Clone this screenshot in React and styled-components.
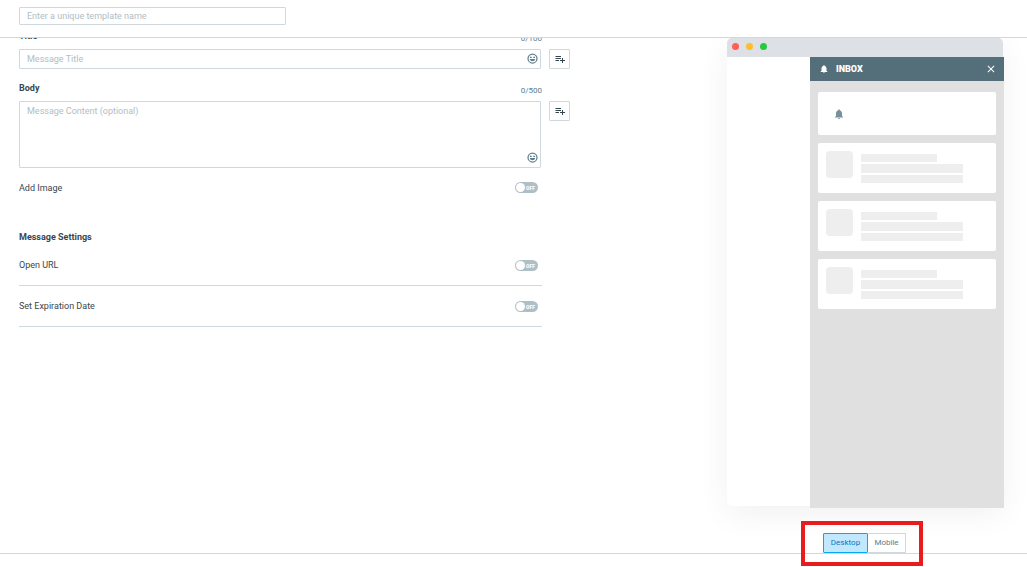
import React, { useState } from "react";
import styled, { createGlobalStyle } from "styled-components";
import { MdPlaylistAdd, MdNotifications, MdClose } from "react-icons/md";

const line = "#cfd8dc";
const ink = "#37474f";
const muted = "#607d8b";

const GlobalStyle = createGlobalStyle`
  *, *::before, *::after { box-sizing: border-box; }
  body { margin: 0; background: #fff; color: ${ink}; font: 9px/16px Roboto, "Liberation Sans", sans-serif; }
  button, input, textarea { font: inherit; color: inherit; margin: 0; }
`;

const Page = styled.div`
  display: flex;
  flex-direction: column;
  height: 100vh;
  overflow: hidden;
`;

const Header = styled.header`
  position: relative;
  z-index: 1;
  flex: none;
  padding: 7px 19px 12px;
  background: #fff;
  border-bottom: 1px solid ${line};
`;

const Field = styled.input`
  display: block;
  width: 100%;
  max-width: ${(p) => p.$max || "none"};
  height: ${(p) => (p.$max ? "18px" : "20px")};
  padding: 0 7px;
  border: 1px solid ${line};
  border-radius: 1px;
  background: #fff;
  outline: none;
  &::placeholder { color: #b0bec5; opacity: 1; }
`;

const Area = styled(Field)`
  height: 67px;
  padding: 1px 7px;
  resize: none;
`;

const Main = styled.main`
  display: flex;
  flex: 1;
  justify-content: space-between;
  min-height: 0;
  padding: 0 24px 0 19px;
`;

const Form = styled.form`
  flex: 0 1 551px;
  min-width: 0;
  overflow: hidden;
`;

const Scrolled = styled.div`
  margin-top: -10px;
`;

const LabelRow = styled.div`
  display: flex;
  justify-content: space-between;
  height: 21px;
  margin-right: 28px;
`;

const Label = styled.label`
  font-weight: 700;
`;

const Counter = styled.span`
  padding-top: 3px;
  color: ${muted};
  font-size: 8px;
`;

const FieldRow = styled.div`
  display: flex;
  align-items: flex-start;
  gap: 8px;
  margin-bottom: ${(p) => p.$gap};
`;

const FieldBox = styled.div`
  position: relative;
  flex: 1;
`;

const EmojiButton = styled.button`
  position: absolute;
  right: 3px;
  bottom: 5px;
  display: flex;
  padding: 0;
  border: 0;
  background: none;
  color: ${muted};
`;

const AddButton = styled.button`
  display: flex;
  align-items: center;
  justify-content: center;
  width: 21px;
  height: 20px;
  padding: 0;
  border: 1px solid ${line};
  border-radius: 1px;
  background: #fff;
  font-size: 12px;
`;

const SettingRow = styled.label`
  display: flex;
  align-items: center;
  justify-content: space-between;
  height: ${(p) => (p.$plain ? "39px" : "41px")};
  margin-right: 28px;
  padding-right: 4px;
  border-bottom: ${(p) => (p.$plain ? "0" : `1px solid ${line}`)};
`;

const Heading = styled.h2`
  margin: 23px 0 0;
  font-size: inherit;
  font-weight: 700;
  line-height: 15px;
`;

const Switch = styled.span`
  position: relative;
  display: flex;
  width: 23px;
  height: 11px;
  border-radius: 6px;
  background: #b0bec5;
`;

const SwitchInput = styled.input`
  position: absolute;
  inset: 0;
  width: 100%;
  height: 100%;
  margin: 0;
  opacity: 0;
`;

const Knob = styled.span`
  width: 9px;
  height: 9px;
  margin: 1px;
  border-radius: 50%;
  background: #fff;
`;

const SwitchText = styled.span`
  color: #fff;
  font-size: 5px;
  font-weight: 900;
  line-height: 13px;
`;

const Preview = styled.aside`
  display: flex;
  flex: 0 0 276px;
  flex-direction: column;
  align-items: center;
`;

const Browser = styled.section`
  display: flex;
  flex: 1;
  flex-direction: column;
  align-self: stretch;
  margin-bottom: 27px;
  border-radius: 5px;
  background: #fff;
  box-shadow: 0 8px 32px rgba(0, 0, 0, 0.06);
`;

const TitleBar = styled.div`
  display: flex;
  gap: 7px;
  height: 19px;
  padding: 5px;
  border-radius: 5px 5px 0 0;
  background: #dde1e6;
`;

const Dot = styled.span`
  width: 7px;
  height: 7px;
  border-radius: 50%;
  background: ${(p) => p.$color};
`;

const Drawer = styled.div`
  flex: 1;
  width: 194px;
  margin: 0 -1px -2px auto;
  background: #e0e0e0;
`;

const DrawerHeader = styled.div`
  display: flex;
  align-items: center;
  gap: 7px;
  height: 24px;
  padding: 0 7px 0 9px;
  background: #546e7a;
  color: #fff;
  font-weight: 900;
  svg { font-size: 10px; }
`;

const CloseButton = styled.button`
  display: flex;
  margin-left: auto;
  padding: 0;
  border: 0;
  background: none;
  svg { font-size: 12px; }
`;

const Cards = styled.div`
  display: flex;
  flex-direction: column;
  gap: 8px;
  padding: 11px 8px;
`;

const Card = styled.article`
  display: flex;
  gap: 8px;
  height: 50px;
  padding: 8px;
  border-radius: 2px;
  background: #fff;
`;

const NoticeCard = styled(Card)`
  align-items: center;
  height: 43px;
  padding: 0 15px;
  color: #78909c;
  font-size: 12px;
`;

const Thumb = styled.span`
  width: 27px;
  height: 27px;
  border-radius: 4px;
  background: #eee;
`;

const Lines = styled.div`
  display: flex;
  flex-direction: column;
  gap: 2px;
  padding-top: 3px;
`;

const Bar = styled.span`
  width: ${(p) => (p.$short ? "76px" : "102px")};
  height: ${(p) => (p.$tall ? "9px" : "8px")};
  background: #eee;
`;

const Segments = styled.div`
  position: relative;
  z-index: 1;
  display: grid;
  grid-template-columns: 45px 38px;
  margin-right: 1px;
`;

const Segment = styled.button`
  height: 20px;
  padding: 0;
  border: 1px solid ${(p) => (p.$active ? "#03a9f4" : line)};
  border-left-width: ${(p) => (p.$active ? "1px" : "0")};
  border-radius: 1px;
  background: ${(p) => (p.$active ? "#c2e8ff" : "#fff")};
  color: ${(p) => (p.$active ? "#0277bd" : muted)};
  font-size: 8px;
`;

const Highlight = styled.span`
  position: absolute;
  inset: -12px -17px -13px -22px;
  border: 4px solid #e81c1c;
  pointer-events: none;
`;

const Footer = styled.footer`
  flex: none;
  height: 14px;
  border-top: 1px solid ${line};
`;

function EmojiIcon() {
  return (
    <svg width="11" height="11" viewBox="0 0 22 22" fill="none" aria-hidden="true">
      <circle cx="11" cy="11" r="9" stroke="currentColor" strokeWidth="2.500" />
      <path d="M6 8.500h3.500M12.500 8.500H16" stroke="currentColor" strokeWidth="2.500" />
      <path d="M5.500 12h11c-.6 3-2.800 4.500-5.500 4.500S6.100 15 5.500 12z" fill="currentColor" />
    </svg>
  );
}

function Setting({ text, plain }) {
  return (
    <SettingRow $plain={plain}>
      {text}
      <Switch>
        <Knob />
        <SwitchText>OFF</SwitchText>
        <SwitchInput type="checkbox" role="switch" aria-label={text} />
      </Switch>
    </SettingRow>
  );
}

export default function App() {
  const [device, setDevice] = useState("Desktop");
  return (
    <Page>
      <GlobalStyle />
      <Header>
        <Field $max="267px" aria-label="Template name" placeholder="Enter a unique template name" />
      </Header>
      <Main>
        <Form>
          <Scrolled>
            <LabelRow>
              <Label htmlFor="title">Title</Label>
              <Counter>0/100</Counter>
            </LabelRow>
            <FieldRow $gap="11px">
              <FieldBox>
                <Field id="title" placeholder="Message Title" />
                <EmojiButton type="button" aria-label="Insert emoji"><EmojiIcon /></EmojiButton>
              </FieldBox>
              <AddButton type="button" aria-label="Personalize title"><MdPlaylistAdd /></AddButton>
            </FieldRow>
            <LabelRow>
              <Label htmlFor="body">Body</Label>
              <Counter>0/500</Counter>
            </LabelRow>
            <FieldRow $gap="0">
              <FieldBox>
                <Area as="textarea" id="body" placeholder="Message Content (optional)" />
                <EmojiButton type="button" aria-label="Insert emoji"><EmojiIcon /></EmojiButton>
              </FieldBox>
              <AddButton type="button" aria-label="Personalize body"><MdPlaylistAdd /></AddButton>
            </FieldRow>
            <Setting text="Add Image" plain />
            <Heading>Message Settings</Heading>
            <Setting text="Open URL" />
            <Setting text="Set Expiration Date" />
          </Scrolled>
        </Form>
        <Preview>
          <Browser>
            <TitleBar>
              <Dot $color="#ff5f57" />
              <Dot $color="#febc2e" />
              <Dot $color="#28c840" />
            </TitleBar>
            <Drawer>
              <DrawerHeader>
                <MdNotifications />
                INBOX
                <CloseButton type="button" aria-label="Close inbox"><MdClose /></CloseButton>
              </DrawerHeader>
              <Cards>
                <NoticeCard><MdNotifications /></NoticeCard>
                {[1, 2, 3].map((n) => (
                  <Card key={n}>
                    <Thumb />
                    <Lines>
                      <Bar $short />
                      <Bar $tall />
                      <Bar />
                    </Lines>
                  </Card>
                ))}
              </Cards>
            </Drawer>
          </Browser>
          <Segments>
            {["Desktop", "Mobile"].map((name) => (
              <Segment key={name} type="button" $active={device === name} aria-pressed={device === name} onClick={() => setDevice(name)}>
                {name}
              </Segment>
            ))}
            <Highlight />
          </Segments>
        </Preview>
      </Main>
      <Footer />
    </Page>
  );
}
